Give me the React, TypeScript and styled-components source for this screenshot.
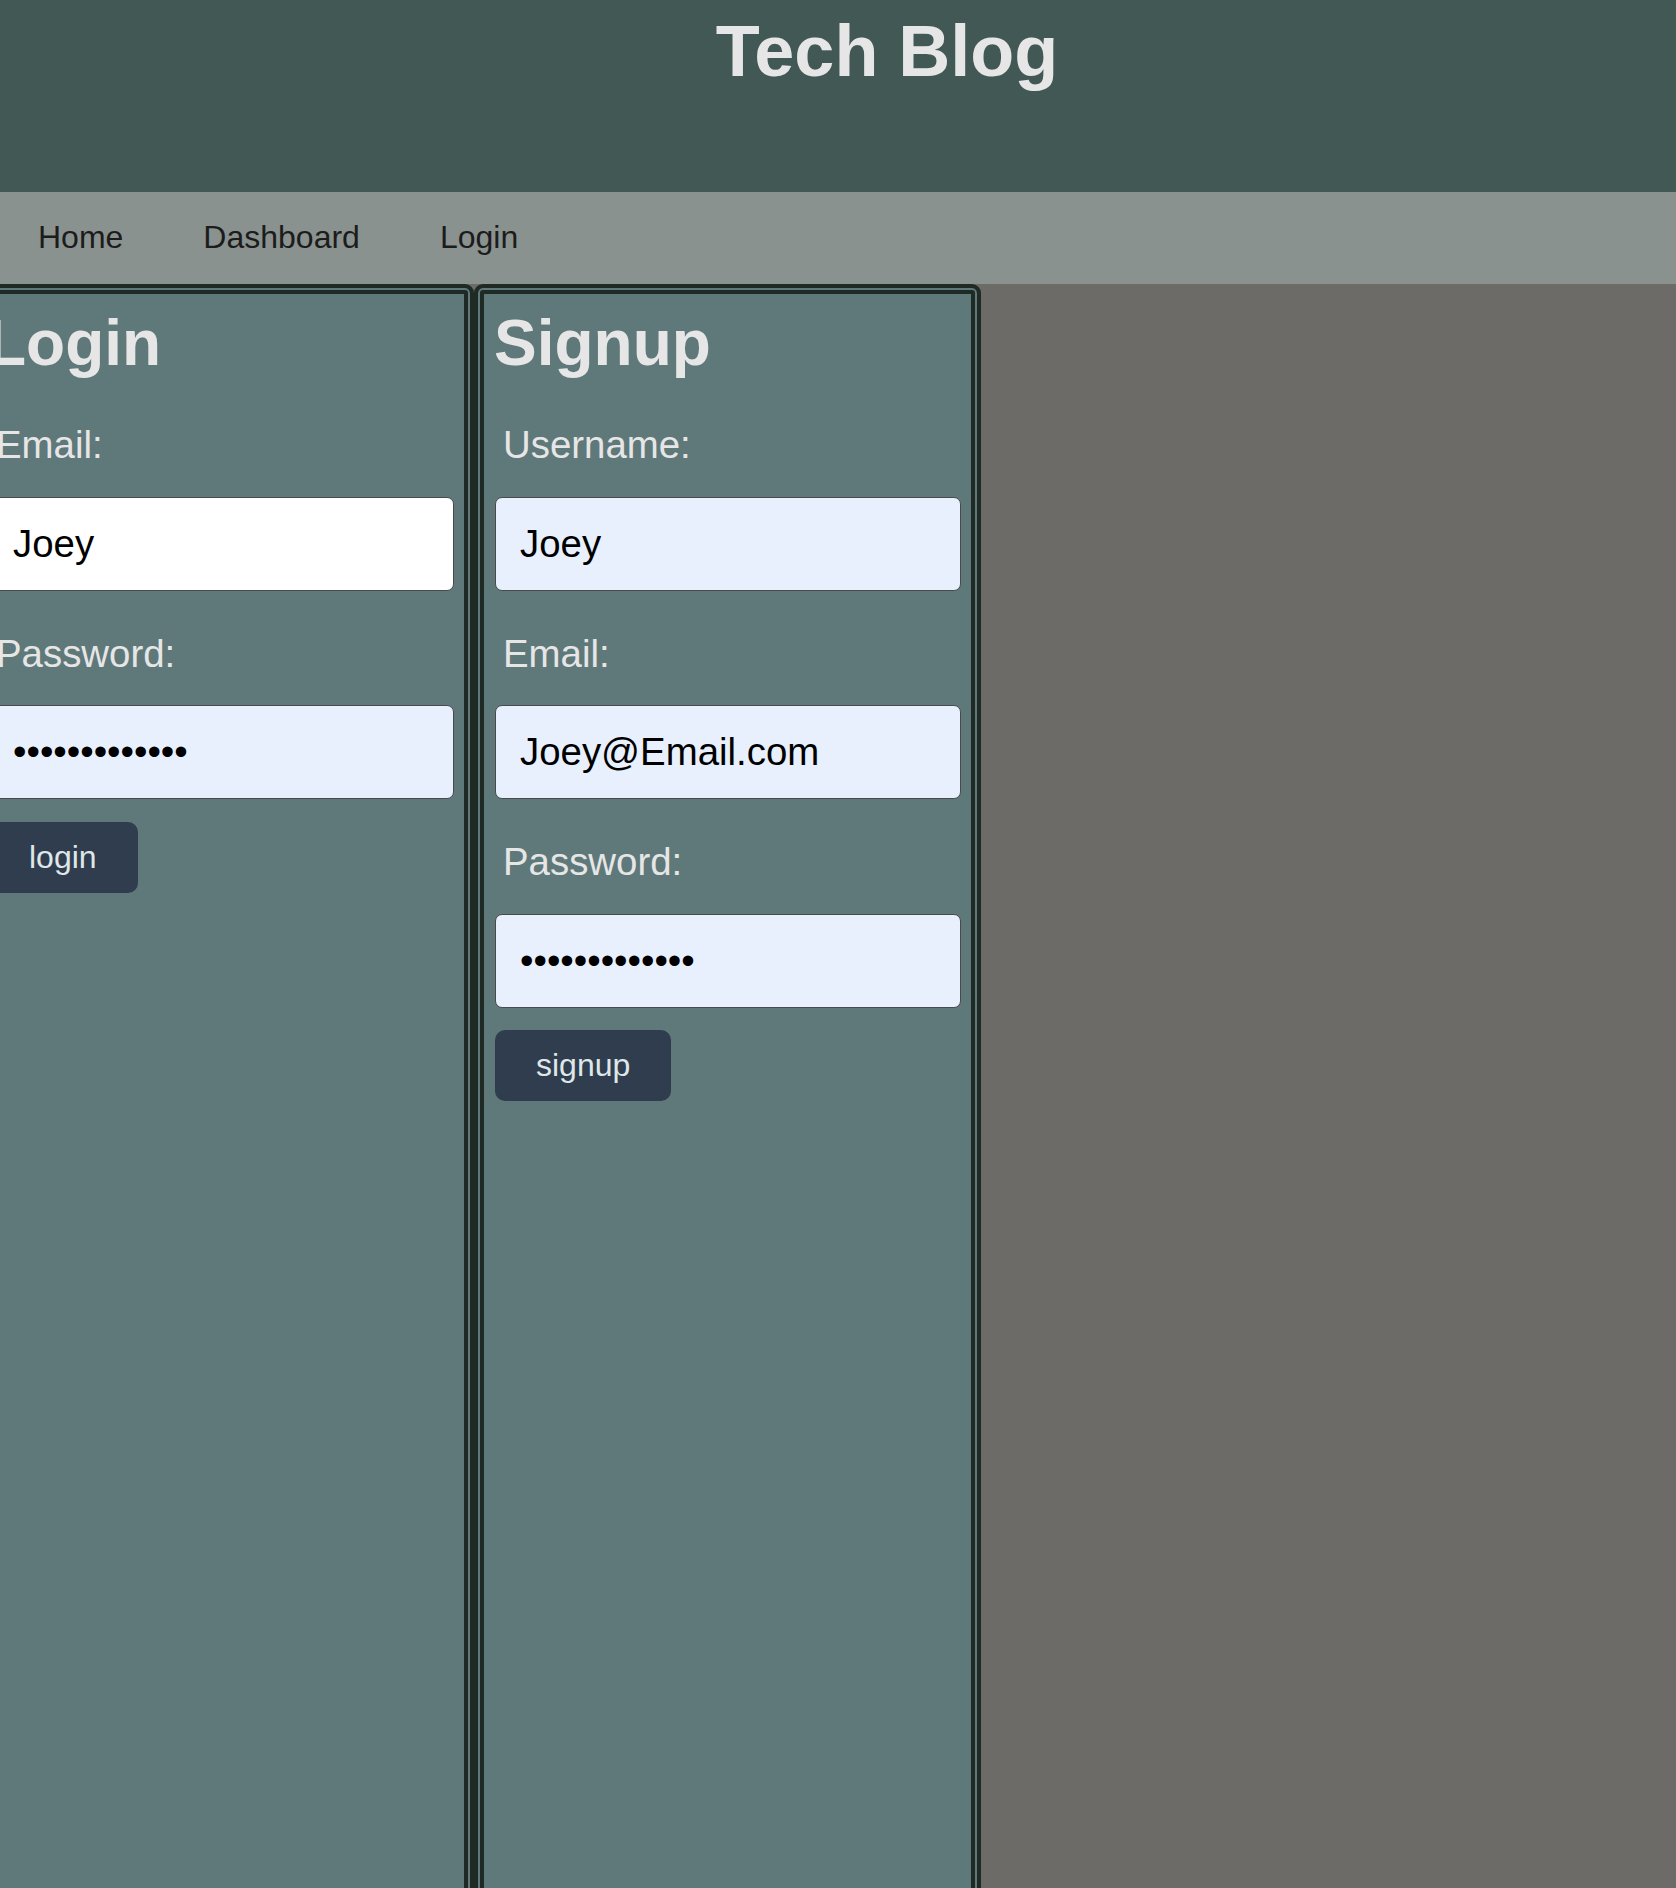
import React from 'react';
import styled, { createGlobalStyle } from 'styled-components';

const GlobalStyle = createGlobalStyle`
  html, body {
    margin: 0;
    padding: 0;
  }

  body {
    font-family: "Liberation Sans", Arial, sans-serif;
    background-color: #6d6b67;
  }
`;

const Page = styled.div`
  height: 100vh;
  overflow: hidden;
  display: flex;
  flex-direction: column;
`;

const Header = styled.header`
  background-color: #425854;
  height: 192px;
  box-sizing: border-box;
  padding: 10px 0 0 98px;
  text-align: center;
  flex-shrink: 0;
`;

const Title = styled.h1`
  margin: 0;
  font-size: 72px;
  font-weight: 700;
  color: #e6e6e6;
`;

const Nav = styled.nav`
  background-color: #89928e;
  height: 92px;
  display: flex;
  align-items: center;
  gap: 80px;
  padding: 0 0 2px 38px;
  box-sizing: border-box;
  flex-shrink: 0;
`;

const NavLink = styled.a`
  font-size: 32px;
  color: #1c1c1c;
  text-decoration: none;
  cursor: pointer;
`;

const Main = styled.main`
  display: flex;
  align-items: flex-start;
  margin-left: -33px;
`;

const Panel = styled.section`
  width: 507px;
  min-height: 1700px;
  box-sizing: border-box;
  border: 4px solid #1f2a24;
  border-radius: 9px;
  box-shadow: inset 0 0 0 2px #5f787a, inset 0 0 0 6px #1f2a24;
  background-color: #5f787a;
  padding: 10px 16px 0 18px;
`;

const Form = styled.form`
  display: flex;
  flex-direction: column;
  align-items: flex-start;
`;

const Heading = styled.h2`
  margin: 8px 0 2px -2px;
  font-size: 64px;
  font-weight: 700;
  color: #e6e6e6;
`;

const Label = styled.label`
  display: block;
  margin: 41px 0 29.5px 7px;
  font-size: 38.4px;
  color: #e6e6e6;
`;

const Input = styled.input<{ $filled?: boolean }>`
  width: 466px;
  height: 94px;
  margin-left: -1px;
  box-sizing: border-box;
  padding: 0 24px;
  border: 1px solid #4a4a4a;
  border-radius: 7px;
  background-color: ${props => (props.$filled ? '#e8f0fe' : '#ffffff')};
  font-family: "Liberation Sans", Arial, sans-serif;
  font-size: 38.4px;
  color: #000;
  outline: none;
`;

const SubmitButton = styled.button`
  margin: 22.5px 0 0 -1px;
  padding: 17px 41px;
  border: none;
  border-radius: 10px;
  background-color: #2f3d4e;
  color: #dfe7e8;
  font-family: "Liberation Sans", Arial, sans-serif;
  font-size: 32px;
  line-height: 37px;
  cursor: pointer;
`;

const noop = () => {};

const App: React.FC = () => {
  return (
    <Page>
      <GlobalStyle />
      <Header>
        <Title>Tech Blog</Title>
      </Header>
      <Nav>
        <NavLink>Home</NavLink>
        <NavLink>Dashboard</NavLink>
        <NavLink>Login</NavLink>
      </Nav>
      <Main>
        <Panel>
          <Form onSubmit={e => e.preventDefault()}>
            <Heading>Login</Heading>
            <Label htmlFor="login-email">Email:</Label>
            <Input id="login-email" type="text" value="Joey" onChange={noop} />
            <Label htmlFor="login-password">Password:</Label>
            <Input id="login-password" type="password" value="password12345" onChange={noop} $filled />
            <SubmitButton type="submit">login</SubmitButton>
          </Form>
        </Panel>
        <Panel>
          <Form onSubmit={e => e.preventDefault()}>
            <Heading>Signup</Heading>
            <Label htmlFor="signup-username">Username:</Label>
            <Input id="signup-username" type="text" value="Joey" onChange={noop} $filled />
            <Label htmlFor="signup-email">Email:</Label>
            <Input id="signup-email" type="text" value="Joey@Email.com" onChange={noop} $filled />
            <Label htmlFor="signup-password">Password:</Label>
            <Input id="signup-password" type="password" value="password12345" onChange={noop} $filled />
            <SubmitButton type="submit">signup</SubmitButton>
          </Form>
        </Panel>
      </Main>
    </Page>
  );
};

export default App;
